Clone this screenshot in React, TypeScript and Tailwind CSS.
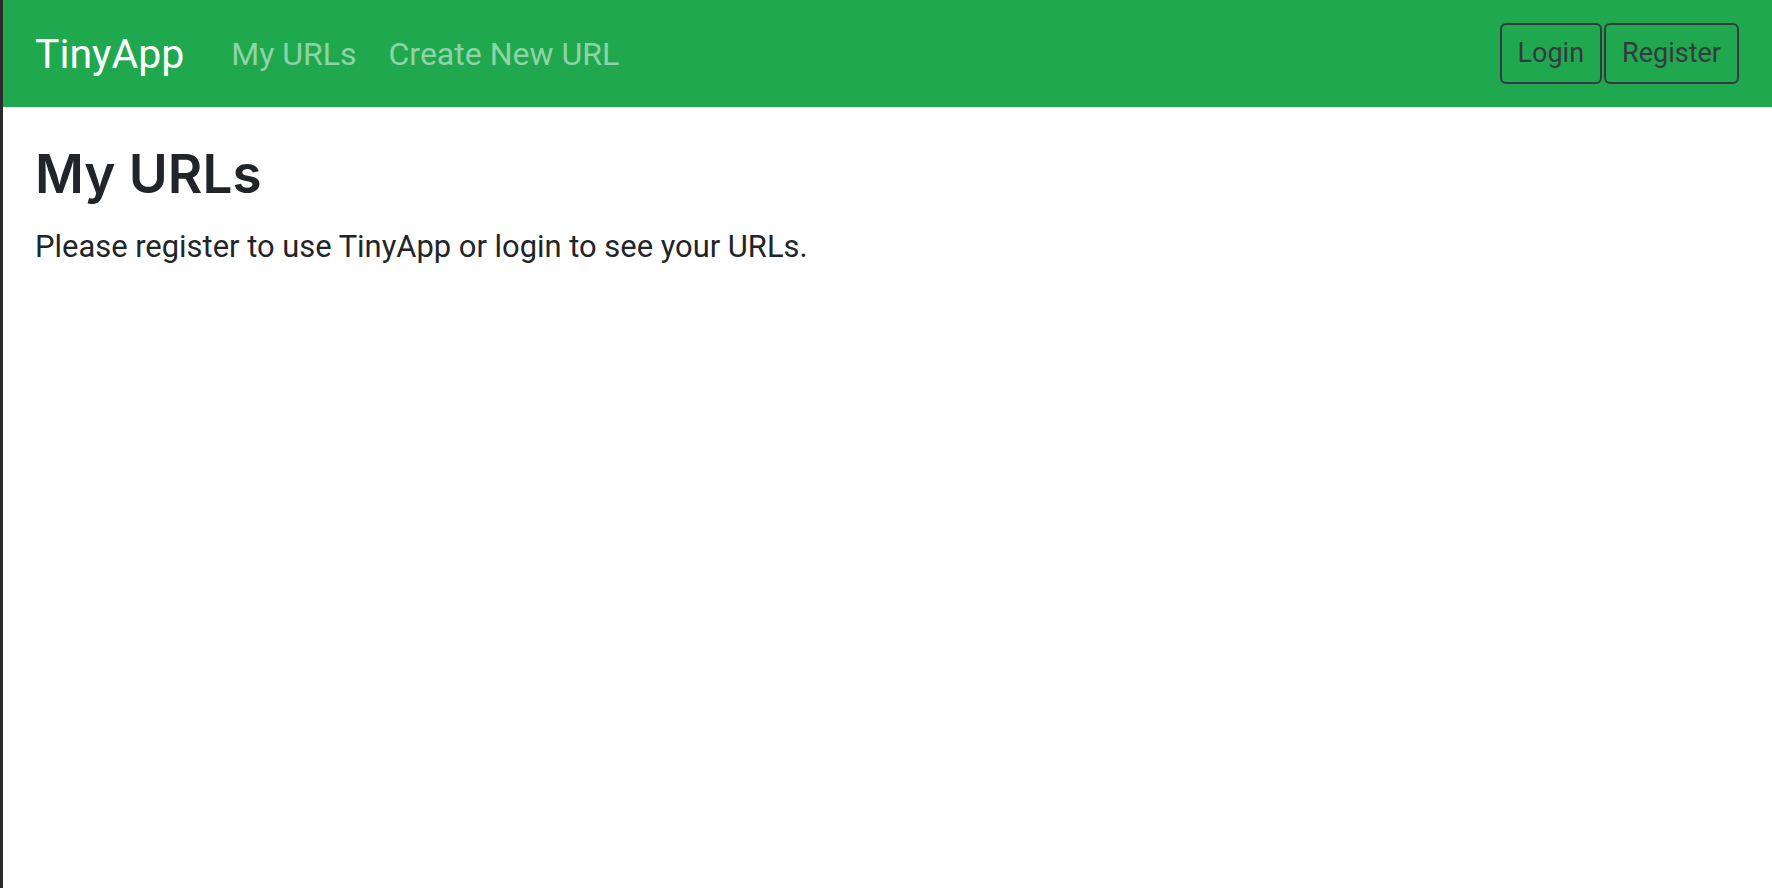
import React from "react";

export default function App() {
  return (
    <div
      className="min-h-[888px] w-full border-l-[3px] border-[#2a2a2a] bg-white text-[#212529]"
      style={{ fontFamily: "Roboto, 'Liberation Sans', sans-serif" }}
    >
      <nav className="flex h-[107px] items-center bg-[#20a84f] pl-8 pr-[33px]">
        <a className="mr-[31px] text-[41px] leading-[60px] text-white">TinyApp</a>
        <a className="px-4 text-[32px] leading-[48px] text-[#8fd3a7]">My URLs</a>
        <a className="px-4 text-[32px] leading-[48px] text-[#8fd3a7]">Create New URL</a>
        <div className="ml-auto flex items-center gap-[2px]">
          <button className="rounded-[6px] border-2 border-[#343a40] px-4 py-2 text-[27px] leading-[41px] text-[#343a40]">
            Login
          </button>
          <button className="rounded-[6px] border-2 border-[#343a40] px-4 py-2 text-[27px] leading-[41px] text-[#343a40]">
            Register
          </button>
        </div>
      </nav>
      <main className="px-8 pt-[36px]">
        <h1
          className="text-[53px] font-[560] leading-[1.2]"
          style={{ fontFamily: "Inter, Roboto, sans-serif" }}
        >
          My URLs
        </h1>
        <p className="mt-[16px] text-[30.9px] leading-[48px]">
          Please register to use TinyApp or login to see your URLs.
        </p>
      </main>
    </div>
  );
}
